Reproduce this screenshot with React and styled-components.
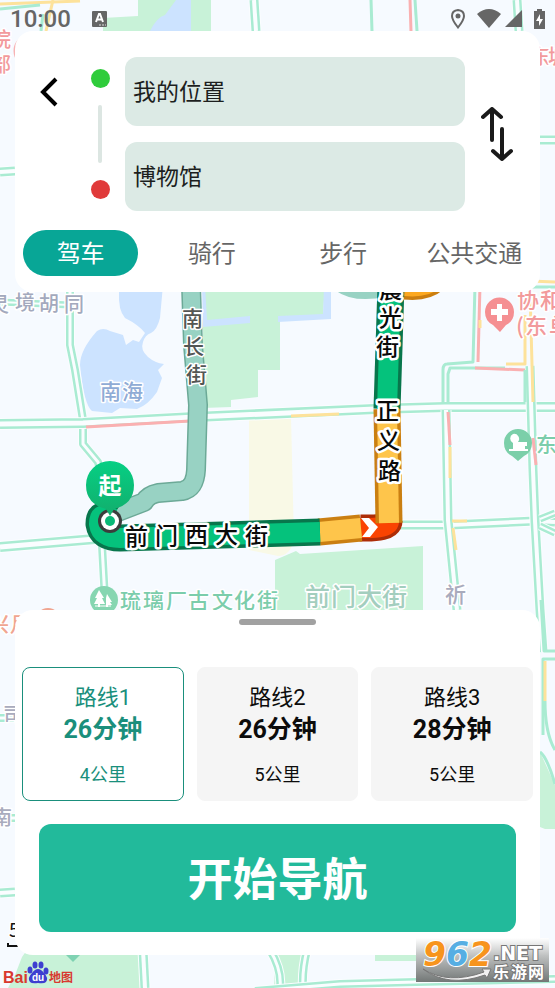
import styled, { createGlobalStyle, css } from 'styled-components';
import { useState } from 'react';

const GlobalStyle = createGlobalStyle`
    * {
        box-sizing: border-box;
    }

    body {
        margin: 0;
        font-family: Roboto, "Noto Sans CJK SC", sans-serif;
        background-color: #f6faff;
    }

    button,
    input {
        font-family: inherit;
        border: none;
        margin: 0;
        padding: 0;
        background: none;
    }

    button {
        cursor: pointer;
    }
`;

const Screen = styled.div`
    display: grid;
    grid-template-columns: minmax(0, 1fr);
    min-height: 100vh;
`;

const MapLayer = styled.div`
    position: absolute;
    inset: 0;
    overflow: hidden;

    svg {
        display: block;
        width: 100%;
        height: 100%;
    }
`;

const Overlay = styled.div`
    position: relative;
    display: flex;
    flex-direction: column;
`;

const StatusBar = styled.header`
    display: flex;
    justify-content: space-between;
    align-items: center;
    height: 31px;
    padding: 6px 10px 0 10px;
    color: #666;
`;

const StatusGroup = styled.div`
    display: flex;
    align-items: center;
    gap: ${({ $gap }) => $gap}px;
`;

const Clock = styled.time`
    font-size: 24px;
    font-weight: 500;
    line-height: 24px;
`;

const SearchPanel = styled.section`
    margin: 0 15px;
    padding: 26px 0 16px;
    background-color: #fff;
    border-radius: 18px;
`;

const RouteForm = styled.form`
    display: grid;
    grid-template-columns: 68px 34px minmax(0, 1fr) 63px;
    padding-right: 12px;
`;

const BackButton = styled.button`
    display: flex;
    align-items: center;
    justify-content: center;
    height: 69px;
`;

const Stops = styled.div`
    display: flex;
    flex-direction: column;
    align-items: center;
    justify-content: space-between;
    padding: 12px 0;
`;

const Dot = styled.span`
    width: 19px;
    height: 19px;
    border-radius: 50%;
    background-color: ${({ $color }) => $color};
`;

const StopLine = styled.span`
    width: 4px;
    height: 58px;
    border-radius: 2px;
    background-color: #dce6e2;
`;

const Fields = styled.div`
    display: flex;
    flex-direction: column;
    gap: 16px;
    padding-left: 8px;
`;

const Field = styled.input`
    width: 100%;
    height: 69px;
    padding: 0 8px 3px;
    border-radius: 12px;
    background-color: #dceae5;
    color: #1d1f1e;
    font-size: 23px;
`;

const SwapButton = styled.button`
    display: flex;
    align-items: center;
    justify-content: center;
`;

const Tabs = styled.nav`
    display: grid;
    grid-template-columns: repeat(4, 1fr);
    margin-top: 19px;
`;

const Tab = styled.button`
    height: 46px;
    margin: 0 8px;
    padding-bottom: 3px;
    border-radius: 23px;
    color: #666;
    font-size: 24px;
    white-space: nowrap;

    ${({ $active }) => $active && css`
        background-color: #08a696;
        color: #fff;
    `}
`;

const Gap = styled.div`
    flex: 1;
    min-height: 120px;
`;

const Sheet = styled.section`
    display: flex;
    flex-direction: column;
    margin: 0 15px;
    padding: 9px 7px 23px;
    background-color: #fff;
    border-radius: 18px;
`;

const Handle = styled.span`
    align-self: center;
    width: 77px;
    height: 6px;
    border-radius: 3px;
    background-color: #a1a1a1;
`;

const RouteList = styled.div`
    display: grid;
    grid-template-columns: repeat(3, 1fr);
    gap: 13px;
    margin-top: 42px;
`;

const RouteCard = styled.button`
    display: flex;
    flex-direction: column;
    align-items: center;
    padding: 14px 0 12px;
    border: 1px solid #f5f5f5;
    border-radius: 8px;
    background-color: #f5f5f5;
    color: #0c0c0c;

    ${({ $active }) => $active && css`
        border-color: #1a8f7c;
        background-color: #fff;
        color: #1a8f7c;
    `}
`;

const RouteName = styled.span`
    font-size: 22px;
    line-height: 32px;
`;

const RouteTime = styled.strong`
    font-size: 25px;
    line-height: 32px;
`;

const RouteLength = styled.span`
    margin-top: 16px;
    font-size: 18px;
    line-height: 26px;
`;

const StartButton = styled.button`
    height: 108px;
    margin: 23px 17px 0;
    padding-bottom: 3px;
    border-radius: 12px;
    background-color: #22ba9b;
    color: #fff;
    font-size: 45px;
    font-weight: 700;
`;

const Footer = styled.footer`
    display: flex;
    align-items: flex-start;
    height: 33px;
    padding: 4px 3px 0;
`;

const Watermark = styled.div`
    position: absolute;
    right: 6px;
    bottom: 6px;

    svg {
        display: block;
    }
`;

const Halo = styled.text`
    font-family: "Noto Sans CJK SC", sans-serif;
    font-size: ${({ $size }) => $size || 21}px;
    font-weight: ${({ $weight }) => $weight || 500};
    fill: ${({ $fill }) => $fill};
    stroke: #fff;
    stroke-width: ${({ $halo }) => $halo || 3}px;
    stroke-linejoin: round;
    paint-order: stroke;
`;

// two thin lanes with a pale gap between them
const Road = ({ d, outer = 9, inner = 4 }) => (
    <g fill="none" strokeLinejoin="round">
        <path d={d} stroke="#fbfdff" strokeWidth={outer + 2} />
        <path d={d} stroke="#a9ebd2" strokeWidth={outer} />
        <path d={d} stroke="#fafdff" strokeWidth={inner} />
    </g>
);

const Lane = ({ d, color = '#a9ebd2' }) => (
    <path d={d} fill="none" stroke={color} strokeWidth="3" strokeLinejoin="round" />
);

const RouteLine = ({ d, edge, color }) => (
    <g fill="none" strokeLinejoin="round">
        <path d={d} stroke={edge} strokeWidth="27" />
        <path d={d} stroke={color} strokeWidth="20" />
    </g>
);

const PINK = '#fab0b1';
const AMBER = '#fde29b';
const PARK = '#c8f2d8';
const WATER = '#cce3ff';
const ALT_ROUTE = 'M191 285L193 345L198 405L196 470Q195 489 182 491L158 493Q148 495 144 502L118 512';

const CityMap = () => (
    <svg viewBox="0 0 555 988" preserveAspectRatio="xMidYMid slice" role="img" aria-label="地图">
        <defs>
            <linearGradient id="pin" x1="0" y1="0" x2="0" y2="1">
                <stop offset="0" stopColor="#06cf84" />
                <stop offset="1" stopColor="#12ae6c" />
            </linearGradient>
        </defs>
        <rect width="555" height="988" fill="#f6faff" />

        <g fill={PARK}>
            <path d="M103 18L138 16V0H211V31H103Z" />
            <path d="M203 285H325L323 315L280 318V370H258V397L231 400V407L203 408Z" />
            <path d="M275 560L296 551L300 554L423 546V620H275Z" />
            <path d="M540 752L555 785V829H545L540 827Z" />
            <path d="M15 975L22 957L27 950H140V988H8Z" />
            <path d="M276 950H305L300 988H274Z" />
            <path d="M375 955H420V961H375Z" />
        </g>
        <g fill={WATER}>
            <path d="M176 0H191V31H150Q157 17 165 15Z" />
            <path d="M119 285H163L160 318Q157 330 151 333Q145 335 143 342Q140 350 148 357Q155 363 164 364L158 370L162 378L157 392Q148 405 137 409L120 408L112 413L92 411Q84 405 80 365Q80 350 97 331Q103 327 110 331L123 335L126 345L133 340L139 342L145 333Q139 325 125 318Q118 310 119 292Z" />
            <path d="M202 285H205L207 320L250 316V323L203 327Z" />
            <path d="M324 285H331V319L278 322V316L323 314Z" />
        </g>
        <path d="M249 420L291 417L294 540Q290 556 278 556L249 550Z" fill="#f9f9e6" />

        <Lane d="M0 4L80 1" color={AMBER} />
        <Lane d="M0 9L40 5" />
        <Lane d="M53 0L46 31" color={AMBER} />
        <Lane d="M43 14L41 31" />
        <Road d="M254 0L256 31" />
        <Lane d="M371 0L372 31" />
        <Lane d="M410 0L411 31" color={PINK} />
        <Lane d="M415 0L417 31" />
        <Road d="M517 0L519 31" />
        <Road d="M0 172L15 171" />
        <Road d="M540 140H555" />
        <Lane d="M530 281L555 282" color={AMBER} />
        <Lane d="M530 287H555" />

        <Road d="M0 302L70 305" outer={7} inner={2} />
        <Road d="M70 285V345L75 370L83 420V444L98 462L102 480V545L105 600" outer={8} inner={3} />
        <Road d="M0 424L83 423L195 417L375 409L445 407H555" outer={10} inner={5} />
        <Lane d="M86 427L190 421" color={PINK} />
        <Lane d="M291 416L339 414" color={AMBER} />
        <Road d="M0 547L95 539" outer={10} inner={5} />
        <Road d="M395 525L450 525L535 521L555 522" />
        <Road d="M446 410L448 520L457 610" />
        <Lane d="M448 412L450 445" color={PINK} />
        <Lane d="M450 447V478" color={AMBER} />
        <Lane d="M453 528L456 550" color={AMBER} />
        <Lane d="M452 521H467" color={AMBER} />
        <Road d="M530 366L533 470L535 521L540 610L543 652" />
        <Lane d="M533 438L536 465" color={PINK} />
        <Road d="M540 526L555 533M540 519L555 513" outer={7} inner={2} />
        <Lane d="M475 285L473 362L447 364Q443 364 443 370V403" />
        <Lane d="M505 368H450L448 374V403" />
        <Lane d="M475 368L525 370" color={PINK} />
        <Lane d="M480 285L478 362" color={PINK} />
        <Lane d="M480 320V328M506 364H525V315M530 290L533 402" color={AMBER} />
        <Lane d="M525 370V402" />
        <Lane d="M541 600L544 651H555M543 735V659H555" />
        <Lane d="M545 661V701" color={AMBER} />
        <Lane d="M545 701Q545 733 555 750M540 752Q547 757 555 784" />
        <Road d="M0 718H15M0 818H16" outer={8} inner={3} />
        <Road d="M0 893L15 892" />
        <Road d="M143 950L145 988" />
        <Road d="M270 950Q282 970 280 988" outer={8} inner={3} />
        <Road d="M307 950Q302 970 303 988" outer={8} inner={3} />
        <Road d="M255 991L340 984L416 982L555 979" outer={8} inner={3} />

        {/* alternative route */}
        <g fill="none" strokeLinejoin="round" strokeLinecap="round">
            <path d="M340 285Q355 296 385 290" stroke="#98d2c3" strokeWidth="14" />
            <path d={ALT_ROUTE} stroke="#6ca997" strokeWidth="20" />
            <path d={ALT_ROUTE} stroke="#98d2c3" strokeWidth="17" />
        </g>

        {/* selected route, coloured by traffic */}
        <RouteLine d="M405 286Q425 288 434 280" edge="#cb7e10" color="#fca820" />
        <RouteLine d="M391 285L387 409" edge="#08764c" color="#05c27c" />
        <RouteLine d="M360 528Q389 529 389 521" edge="#ad2d08" color="#fa4302" />
        <RouteLine d="M387 409L389 523" edge="#ca7f12" color="#fec54b" />
        <RouteLine d="M319 532L361 528" edge="#ca7f12" color="#fec54b" />
        <RouteLine d="M112 518Q99 510 99 524Q101 538 120 538L320 532" edge="#08764c" color="#05c27c" />
        <path d="M361 518H369L378 527L370 537H362L369 528Z" fill="#fff" />

        <Halo x="-11 15 39 64" y="312 310 311 312" $size={20} $fill="#a3a9bd">灵境胡同</Halo>
        <Halo x="100 122" y="399" $fill="#8fabd5">南海</Halo>
        <Halo x="182 183 186" y="326 354 382" $fill="#535654">南长街</Halo>
        <Halo x="379 379 376" y="298 326 355" $size={23} $halo={5} $fill="#090909">晨光街</Halo>
        <Halo x="376 377 378" y="419 449 479" $size={23} $halo={5} $fill="#090909">正义路</Halo>
        <Halo x="125 155 185 215 245" y="545 544 543 543 544" $size={23} $halo={5} $fill="#090909">前门西大街</Halo>
        <Halo x="120 143 166 188 212 234 257" y="608" $fill="#7bcdab">琉璃厂古文化街</Halo>
        <Halo x="305 331 357 382" y="606" $size={25} $fill="#a3cebe">前门大街</Halo>
        <Halo x="445" y="602" $fill="#a9abbd">祈</Halo>
        <Halo x="517 540" y="308" $size={22} $fill="#f29a9c">协和</Halo>
        <Halo x="516 525 549" y="334" $size={22} $fill="#f29a9c">(东单</Halo>
        <Halo x="536" y="452" $fill="#7bcdab">东</Halo>
        <Halo x="-9" y="47" $size={20} $fill="#f29a9c">院</Halo>
        <Halo x="-9" y="72" $size={20} $fill="#f29a9c">部</Halo>
        <Halo x="530 548" y="64" $size={20} $fill="#f29a9c">东城</Halo>
        <Halo x="-11 10" y="632" $size={20} $fill="#f0a591">兴月</Halo>
        <Halo x="3" y="722" $size={20} $fill="#a9abbd">司</Halo>
        <Halo x="-8" y="825" $size={20} $fill="#a9abbd">南</Halo>
        <Halo x="9" y="937" $size={19} $weight={400} $fill="#111">5</Halo>
        <path d="M8 943V946H22" fill="none" stroke="#111" strokeWidth="2" />
        <circle cx="30" cy="51" r="15" fill="none" stroke="#f7b3b4" strokeWidth="3" />
        <circle cx="48" cy="621" r="13" fill="#f0a591" />
        <path d="M66 955H80L73 962Z" fill="#7fd2b2" />

        {/* hospital */}
        <path d="M500 332L493 325Q485 321 485 312A14.500 14.500 0 0 1 514 312Q514 321 506 325Z" fill="#f58f92" />
        <path d="M497 304H502V309H508V315H502V321H497V315H491V309H497Z" fill="#fff" />
        {/* parks */}
        <path d="M518 461L512 456Q504 452 504 443A14 14 0 0 1 532 443Q532 452 524 456Z" fill="#7bcfa9" />
        <path d="M513 434A5 5 0 0 1 518 442H527V446H525V449H528V451H509V449H513V443A5 5 0 0 1 513 434Z" fill="#fff" />
        <circle cx="104" cy="600" r="14" fill="#86d6b1" />
        <path d="M99 590L104 598H102L105 604H100V607H98V604H94L97 598H95ZM107 594L112 602H110L112 605H108V607H106V598Z" fill="#fff" />
        <path d="M95 606H111" stroke="#fff" />

        {/* start marker */}
        <circle cx="110" cy="521" r="12" fill="#3b3d3c" />
        <circle cx="110" cy="521" r="9" fill="#fff" />
        <circle cx="110" cy="521" r="5" fill="#08b977" />
        <path d="M110 516L106 509Q86 504 86 485A24 24 0 0 1 134 485Q134 504 114 509Z" fill="url(#pin)" />
        <text x="110" y="494" textAnchor="middle" fill="#fff" fontSize="23" fontWeight="700" fontFamily="Noto Sans CJK SC, sans-serif">起</text>
    </svg>
);

const KeyboardIcon = () => (
    <svg width="15" height="16" viewBox="0 0 15 16">
        <rect width="15" height="16" rx="1" fill="#666" />
        <path d="M4 11L7 3H8L11 11M5 8.500H10" fill="none" stroke="#fff" strokeWidth="2" />
        <path d="M7 14H9M10 14H12M13 14H14" stroke="#ddd" />
    </svg>
);

const PinIcon = () => (
    <svg width="14" height="20" viewBox="0 0 14 20">
        <path d="M7 1Q1 1.500 1 7Q1 11 7 18.500Q13 11 13 7Q13 1.500 7 1Z" fill="none" stroke="#666" strokeWidth="2" />
        <circle cx="7" cy="7" r="2.500" fill="#666" />
    </svg>
);

const WifiIcon = () => (
    <svg width="24" height="19" viewBox="0 0 24 19">
        <path d="M0 5Q12 -5 24 5L12 19Z" fill="#666" />
    </svg>
);

const SignalIcon = () => (
    <svg width="17" height="17" viewBox="0 0 17 17">
        <path d="M17 0V17H0Z" fill="#666" />
    </svg>
);

const BatteryIcon = () => (
    <svg width="11" height="20" viewBox="0 0 11 20">
        <path d="M3 0H8V2H11V20H0V2H3Z" fill="#666" />
        <path d="M6 5L2 12H5V17L9 10H6Z" fill="#fff" />
    </svg>
);

const BackIcon = () => (
    <svg width="18" height="30" viewBox="0 0 18 30">
        <path d="M16 2L3 15L16 28" fill="none" stroke="#000" strokeWidth="4" />
    </svg>
);

const SwapIcon = () => (
    <svg width="32" height="54" viewBox="0 0 32 54" fill="none" stroke="#1a1a1a" strokeWidth="4" strokeLinecap="round" strokeLinejoin="round">
        <path d="M11 33V2M2 10L11 2L20 10" />
        <path d="M21 22V52M12 44L21 52L30 44" />
    </svg>
);

const BaiduLogo = () => (
    <svg width="70" height="26" viewBox="0 0 70 26" role="img" aria-label="百度地图">
        <text x="0" y="24" fill="#d8392f" fontSize="16" fontWeight="700" fontFamily="Liberation Sans, sans-serif">Bai</text>
        <g fill="#3d3fd0">
            <ellipse cx="27" cy="11" rx="2.500" ry="3.500" />
            <ellipse cx="32" cy="6" rx="2.500" ry="3.500" />
            <ellipse cx="38" cy="6" rx="2.500" ry="3.500" />
            <ellipse cx="43" cy="12" rx="2.500" ry="3.500" />
            <path d="M35 10Q38 10 41 14Q46 19 43 23Q41 25 35 24Q29 25 27 23Q24 19 29 14Q32 10 35 10Z" />
        </g>
        <text x="29" y="22" fill="#fff" fontSize="10" fontWeight="700" fontFamily="Liberation Sans, sans-serif">du</text>
        <text x="46" y="23" fill="#d8392f" fontSize="12" fontWeight="700" fontFamily="Noto Sans CJK SC, sans-serif">地图</text>
    </svg>
);

const SiteLogo = () => (
    <svg width="133" height="44" viewBox="0 0 133 44" role="img" aria-label="962.NET 乐游网">
        <defs>
            <linearGradient id="plate" x1="0" y1="0" x2="0" y2="1">
                <stop offset="0" stopColor="#fff" stopOpacity="0.900" />
                <stop offset="0.400" stopColor="#bfc1c1" />
                <stop offset="1" stopColor="#727776" />
            </linearGradient>
        </defs>
        <rect width="133" height="44" fill="url(#plate)" />
        <g fontFamily="DejaVu Sans, sans-serif" fontSize="33" fontWeight="700" fontStyle="oblique" stroke="#fff" strokeWidth="2" paintOrder="stroke">
            <text x="7" y="28" fill="#f7941d">9</text>
            <text x="30" y="28" fill="#56aee3">6</text>
            <text x="53" y="28" fill="#f7941d">2</text>
        </g>
        <path d="M7 31Q32 47 68 34L66 31L75 31L71 40L69 37Q32 50 7 31Z" fill="#f2f2f2" stroke="#777" strokeWidth="1" />
        <text x="77" y="22" fill="#fff" stroke="#777" strokeWidth="2" paintOrder="stroke" fontSize="19" fontWeight="700" fontFamily="DejaVu Sans, sans-serif">.NET</text>
        <text x="77 95 112" y="40" fill="#fff" stroke="#777" strokeWidth="2" paintOrder="stroke" fontSize="16" fontWeight="700" fontFamily="Noto Sans CJK SC, sans-serif">乐游网</text>
    </svg>
);

const modes = ['驾车', '骑行', '步行', '公共交通'];

const routes = [
    { name: '路线1', time: '26分钟', length: '4公里' },
    { name: '路线2', time: '26分钟', length: '5公里' },
    { name: '路线3', time: '28分钟', length: '5公里' },
];

const App = () => {
    const [from, setFrom] = useState('我的位置');
    const [to, setTo] = useState('博物馆');
    const [mode, setMode] = useState(0);
    const [route, setRoute] = useState(0);

    const swap = () => {
        setFrom(to);
        setTo(from);
    };

    return (
        <Screen>
            <GlobalStyle />
            <MapLayer>
                <CityMap />
            </MapLayer>
            <Overlay>
                <StatusBar>
                    <StatusGroup $gap={21}>
                        <Clock>10:00</Clock>
                        <KeyboardIcon />
                    </StatusGroup>
                    <StatusGroup $gap={12}>
                        <PinIcon />
                        <StatusGroup $gap={4}>
                            <WifiIcon />
                            <SignalIcon />
                        </StatusGroup>
                        <BatteryIcon />
                    </StatusGroup>
                </StatusBar>
                <SearchPanel>
                    <RouteForm onSubmit={(e) => e.preventDefault()}>
                        <BackButton type="button" aria-label="返回">
                            <BackIcon />
                        </BackButton>
                        <Stops>
                            <Dot $color="#2fcc3b" />
                            <StopLine />
                            <Dot $color="#e03a3a" />
                        </Stops>
                        <Fields>
                            <Field aria-label="起点" value={from} onChange={(e) => setFrom(e.target.value)} />
                            <Field aria-label="终点" value={to} onChange={(e) => setTo(e.target.value)} />
                        </Fields>
                        <SwapButton type="button" aria-label="交换" onClick={swap}>
                            <SwapIcon />
                        </SwapButton>
                    </RouteForm>
                    <Tabs>
                        {modes.map((name, i) => (
                            <Tab key={name} type="button" $active={i === mode} onClick={() => setMode(i)}>
                                {name}
                            </Tab>
                        ))}
                    </Tabs>
                </SearchPanel>
                <Gap />
                <Sheet>
                    <Handle />
                    <RouteList>
                        {routes.map((item, i) => (
                            <RouteCard key={item.name} type="button" $active={i === route} onClick={() => setRoute(i)}>
                                <RouteName>{item.name}</RouteName>
                                <RouteTime>{item.time}</RouteTime>
                                <RouteLength>{item.length}</RouteLength>
                            </RouteCard>
                        ))}
                    </RouteList>
                    <StartButton type="button">开始导航</StartButton>
                </Sheet>
                <Footer>
                    <BaiduLogo />
                </Footer>
                <Watermark>
                    <SiteLogo />
                </Watermark>
            </Overlay>
        </Screen>
    );
};

export default App;
